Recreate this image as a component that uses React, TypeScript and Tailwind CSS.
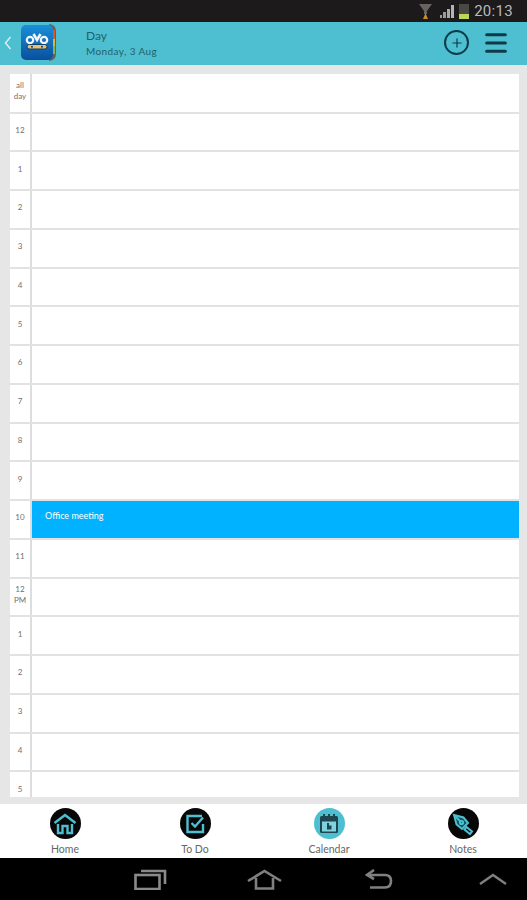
import { Menu, Plus } from 'lucide-react';

const rows = ['all day', '12', '1', '2', '3', '4', '5', '6', '7', '8', '9', '10', '11', '12 PM', '1', '2', '3', '4', '5'];

function AppLogo() {
  return (
    <svg width="36" height="37" viewBox="0 0 36 37">
      <defs>
        <linearGradient id="logoBlue" x1="0" y1="0" x2="0" y2="1">
          <stop offset="0" stopColor="#1a8fd8" />
          <stop offset="1" stopColor="#0a4f9e" />
        </linearGradient>
      </defs>
      <path d="M28 0 Q35 1 35 7 V30 Q35 36 28 37 Z" fill="#6b5f50" />
      <rect x="31.5" y="6" width="2.5" height="9" fill="#d9562e" />
      <rect x="31.5" y="15" width="2.5" height="7" fill="#e4b431" />
      <rect x="31.5" y="22" width="2.5" height="8" fill="#8ab545" />
      <rect x="0" y="1" width="32" height="35" rx="5" fill="url(#logoBlue)" />
      <circle cx="9" cy="16" r="3.2" fill="none" stroke="#eef6fa" strokeWidth="2.2" />
      <path d="M12.5 10 L16 16 L19.5 10" fill="none" stroke="#eef6fa" strokeWidth="2.6" />
      <circle cx="23" cy="16" r="3.2" fill="none" stroke="#eef6fa" strokeWidth="2.2" />
      <rect x="6" y="20.5" width="20" height="4.5" rx="2.2" fill="#e6c46a" stroke="#123a70" strokeWidth="1" />
      <circle cx="11" cy="22.7" r="1" fill="#123a70" />
      <circle cx="21" cy="22.7" r="1" fill="#123a70" />
    </svg>
  );
}

function StatusBar() {
  return (
    <div className="flex h-[22px] shrink-0 items-center justify-end bg-[#1c1a1b] pr-[14px]">
      <svg width="13" height="16" viewBox="0 0 13 16" className="mr-[8px]">
        <path d="M0 1 H13 L8 8 V11 H5 V8Z" fill="#66645f" />
        <path d="M4 16 L6.5 10 L9 16Z" fill="#c98a2c" />
      </svg>
      <svg width="16" height="14" viewBox="0 0 16 14" className="mr-[3px]">
        <rect x="0" y="11" width="2" height="3" fill="#9a9a9a" />
        <rect x="3" y="8" width="3" height="6" fill="#9a9a9a" />
        <rect x="7" y="5" width="3" height="9" fill="#a8a8a8" />
        <rect x="11" y="1" width="3" height="13" fill="#b4b4b4" />
      </svg>
      <div className="mr-[5px] flex h-[15px] w-[10px] flex-col justify-end bg-[#4a4a45]">
        <div className="h-[5px] bg-[#bcd65a]" />
      </div>
      <span className="font-['Roboto',sans-serif] text-[15px] leading-none tracking-[0.3px] text-[#b9b9b9]">20:13</span>
    </div>
  );
}

function Header() {
  return (
    <div className="flex h-[43px] shrink-0 items-center bg-[#4dbfd0] pb-[2px] pl-[4px] pr-[19px]">
      <svg width="8" height="14" viewBox="0 0 8 14" className="mr-[9px]">
        <path d="M6.5 1 L1.5 7 L6.5 13" fill="none" stroke="#d8eef0" strokeWidth="1.5" />
      </svg>
      <AppLogo />
      <div className="ml-[29px] flex flex-col pt-[2px] font-['Lato',sans-serif] text-[#245f6b]">
        <span className="text-[12px] leading-[16px]">Day</span>
        <span className="text-[10px] leading-[15px] tracking-[0.4px]">Monday, 3 Aug</span>
      </div>
      <div className="ml-auto flex h-[25px] w-[25px] items-center justify-center rounded-full border-2 border-[#0f3a48]">
        <Plus size={14} strokeWidth={2} color="#0f3a48" />
      </div>
      <Menu size={28} strokeWidth={2.6} color="#0f3a48" className="ml-[13px] -mr-[2px]" />
    </div>
  );
}

function DayGrid() {
  return (
    <div className="min-h-0 flex-1 bg-[#e6e6e6] pb-[7px] pl-[10px] pr-[8px] pt-[9px]">
      <div className="h-full overflow-hidden bg-white">
        {rows.map((label, i) => (
          <div key={i} className={`flex border-b-2 border-[#e2e2e2] ${i === 0 ? 'h-[39.5px]' : 'h-[38.75px]'}`}>
            <div className="flex w-[22px] shrink-0 items-center justify-center border-r-2 border-[#dddddd] pb-[3px] text-center font-['Lato',sans-serif] text-[8px] leading-[11px] text-[#707070]">
              <span className="w-[16px]">{label}</span>
            </div>
            {label === '10' ? (
              <div className="flex-1 bg-[#00b2ff] pl-[13px] pt-[8px] font-['Lato',sans-serif] text-[9px] leading-[14px] text-white">
                Office meeting
              </div>
            ) : (
              <div className="flex-1" />
            )}
          </div>
        ))}
      </div>
    </div>
  );
}

function NavItem({ label, active, className, children }: { label: string; active?: boolean; className?: string; children: React.ReactNode }) {
  return (
    <div className={`flex w-[60px] flex-col items-center ${className ?? ''}`}>
      <div className={`flex h-[31px] w-[31px] items-center justify-center rounded-full ${active ? 'bg-[#4dbfd0]' : 'bg-[#070707]'}`}>
        {children}
      </div>
      <span className="mt-[3px] font-['Lato',sans-serif] text-[10.5px] leading-[14px] text-[#666666]">{label}</span>
    </div>
  );
}

function BottomTabs() {
  return (
    <div className="flex h-[54px] shrink-0 items-start bg-white pl-[35px] pt-[4px]">
      <NavItem label="Home">
        <svg width="24" height="22" viewBox="0 0 24 22" fill="none" stroke="#4dbfd0" strokeWidth="2.4">
          <path d="M1.5 10 L12 2 L22.5 10" />
          <path d="M5 11 V20 H9.5 V13 H14.5 V20 H19 V11" />
        </svg>
      </NavItem>
      <NavItem label="To Do" className="ml-[70px]">
        <svg width="22" height="22" viewBox="0 0 22 22" fill="none" stroke="#4dbfd0" strokeWidth="2.4">
          <path d="M18 3 H3.5 V19 H19 V11" />
          <path d="M7.5 10 L11 13.5 L19 4.5" />
        </svg>
      </NavItem>
      <NavItem label="Calendar" active className="ml-[74px]">
        <svg width="22" height="22" viewBox="0 0 22 22">
          <rect x="2" y="3" width="18" height="17" rx="1.5" fill="#1d4650" />
          <rect x="4" y="8.5" width="14" height="10" fill="#7fd3df" />
          <rect x="5" y="1" width="2" height="4" fill="#1d4650" />
          <rect x="10" y="1" width="2" height="4" fill="#1d4650" />
          <rect x="15" y="1" width="2" height="4" fill="#1d4650" />
          <path d="M9 10 H11 V12.5 H13.5 V16.5 H9Z" fill="#1d4650" />
        </svg>
      </NavItem>
      <NavItem label="Notes" className="ml-[74px]">
        <svg width="24" height="24" viewBox="0 0 24 24" fill="none" stroke="#4dbfd0" strokeWidth="2">
          <path d="M3 3 L12.5 5.5 L17 11 L11 17 L5.5 12.5Z" fill="#16535e" />
          <path d="M3 3 L9.5 9.5" />
          <circle cx="10.5" cy="10.5" r="1.6" />
          <path d="M15.5 15 L21 19.5 L19 22 L13.5 17.5Z" />
        </svg>
      </NavItem>
    </div>
  );
}

function SystemBar() {
  return (
    <div className="flex h-[42px] shrink-0 items-center bg-black pl-[134px] pr-[20px]">
      <svg width="33" height="21" viewBox="0 0 33 21" fill="none" stroke="#8a8a8a" strokeWidth="2.6">
        <rect x="1.5" y="6" width="24" height="14" />
        <path d="M7 2 H31 V15" />
      </svg>
      <svg width="35" height="21" viewBox="0 0 35 21" fill="none" stroke="#808080" strokeWidth="2.6" className="ml-[80px]">
        <path d="M1 12 L17.5 2 L34 12" />
        <path d="M9 9 V19.5 H26 V9" />
      </svg>
      <svg width="28" height="21" viewBox="0 0 28 21" fill="none" stroke="#808080" strokeWidth="2.6" className="ml-[83px]">
        <path d="M3 6 H20 Q26 6 26 12 Q26 18.5 20 18.5 H5" />
        <path d="M9 1 L2 6 L9 10" />
      </svg>
      <svg width="28" height="12" viewBox="0 0 28 12" fill="none" stroke="#808080" strokeWidth="2.4" className="ml-auto">
        <path d="M1 11 L14 2 L27 11" />
      </svg>
    </div>
  );
}

export default function App() {
  return (
    <div className="flex h-[900px] w-[527px] flex-col overflow-hidden bg-white">
      <StatusBar />
      <Header />
      <DayGrid />
      <BottomTabs />
      <SystemBar />
    </div>
  );
}
